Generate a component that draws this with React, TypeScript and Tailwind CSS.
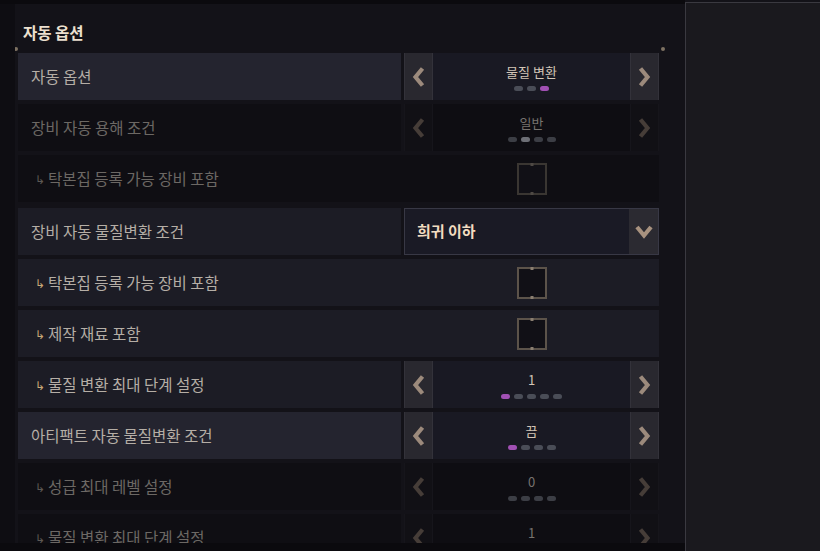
import React from "react";

type Row =
  | { kind: "select"; label: string; value: string; dots: number; active: number; sub?: boolean; disabled?: boolean; highlight?: boolean }
  | { kind: "check"; label: string; sub?: boolean; disabled?: boolean }
  | { kind: "dropdown"; label: string; value: string };

const rows: Row[] = [
  { kind: "select", label: "자동 옵션", value: "물질 변환", dots: 3, active: 2, highlight: true },
  { kind: "select", label: "장비 자동 용해 조건", value: "일반", dots: 4, active: 1, disabled: true },
  { kind: "check", label: "탁본집 등록 가능 장비 포함", sub: true, disabled: true },
  { kind: "dropdown", label: "장비 자동 물질변환 조건", value: "희귀 이하" },
  { kind: "check", label: "탁본집 등록 가능 장비 포함", sub: true },
  { kind: "check", label: "제작 재료 포함", sub: true },
  { kind: "select", label: "물질 변환 최대 단계 설정", value: "1", dots: 5, active: 0, sub: true },
  { kind: "select", label: "아티팩트 자동 물질변환 조건", value: "끔", dots: 4, active: 0, highlight: true },
  { kind: "select", label: "성급 최대 레벨 설정", value: "0", dots: 4, active: -1, sub: true, disabled: true },
  { kind: "select", label: "물질 변환 최대 단계 설정", value: "1", dots: 4, active: -1, sub: true, disabled: true },
];

function Chevron({ dir, dim }: { dir: "left" | "right"; dim?: boolean }) {
  const d = dir === "left" ? "M10.5 1.5 L3.5 10 L10.5 18.5" : "M2.5 1.5 L9.5 10 L2.5 18.5";
  return (
    <svg width="13" height="20" viewBox="0 0 13 20">
      <path d={d} fill="none" stroke={dim ? "#463d38" : "#9c8a7c"} strokeWidth="4.2" strokeLinejoin="miter" />
    </svg>
  );
}

function ArrowButton({ dir, disabled }: { dir: "left" | "right"; disabled?: boolean }) {
  return (
    <div
      className={
        "w-[29px] h-full flex items-center justify-center border-x " +
        (disabled ? "bg-[#111015] border-[#16151b]" : "bg-[#29282f] border-[#33323a]")
      }
    >
      <Chevron dir={dir} dim={disabled} />
    </div>
  );
}

function Label({ text, sub, disabled }: { text: string; sub?: boolean; disabled?: boolean }) {
  return (
    <div className={"flex items-center text-[15.5px] " + (sub ? "pl-[17px]" : "pl-[13px]")}>
      {sub && (
        <span className={"mr-[3px] text-[12px] " + (disabled ? "text-[#5e5954]" : "text-[#c9a877]")}>↳</span>
      )}
      <span className={disabled ? "text-[#6c6864]" : "text-[#b5aea6]"}>{text}</span>
    </div>
  );
}

function Dots({ count, active, disabled }: { count: number; active: number; disabled?: boolean }) {
  return (
    <div className="flex gap-[4px] mt-[6px]">
      {Array.from({ length: count }).map((_, i) => (
        <div
          key={i}
          className={
            "w-[9px] h-[5px] rounded-full " +
            (i === active
              ? disabled
                ? "bg-[#6d6f76]"
                : "bg-[#a150b4]"
              : disabled
              ? "bg-[#3c3e45]"
              : "bg-[#4a4d57]")
          }
        />
      ))}
    </div>
  );
}

function Checkbox({ disabled }: { disabled?: boolean }) {
  const c = disabled ? "border-[#3a3632]" : "border-[#5c534a]";
  const dot = disabled ? "bg-[#4e4944]" : "bg-[#8a7e70]";
  return (
    <div className={"relative w-[30px] h-[32px] border-2 bg-[#111016] " + c}>
      <div className={"absolute left-1/2 -translate-x-1/2 -top-[2px] w-[3px] h-[3px] " + dot} />
      <div className={"absolute left-1/2 -translate-x-1/2 -bottom-[2px] w-[3px] h-[3px] " + dot} />
    </div>
  );
}

function OptionRow({ row }: { row: Row }) {
  if (row.kind === "dropdown") {
    return (
      <div className="flex h-[47px] shrink-0 mt-[2px]">
        <div className="w-[383px] bg-[#1c1c25] flex items-center">
          <Label text={row.label} />
        </div>
        <div className="ml-[3px] flex-1 flex border border-[#383845] bg-[#1a1a25]">
          <div className="flex-1 flex items-center pl-[12px] text-[15px] font-bold text-[#f2dcc0]">{row.value}</div>
          <div className="w-[29px] bg-[#2b2a31] flex items-center justify-center">
            <svg width="18" height="14" viewBox="0 0 18 14">
              <path d="M2 2 L9 10.5 L16 2" fill="none" stroke="#a8927f" strokeWidth="4.2" />
            </svg>
          </div>
        </div>
      </div>
    );
  }
  const disabled = "disabled" in row && row.disabled;
  const labelBg = disabled ? "bg-[#0f0e13]" : "highlight" in row && row.highlight ? "bg-[#24242f]" : "bg-[#1c1c25]";
  if (row.kind === "check") {
    return (
      <div className={"flex h-[47px] shrink-0 " + labelBg}>
        <div className="w-[383px] flex items-center">
          <Label text={row.label} sub={row.sub} disabled={disabled} />
        </div>
        <div className="ml-[3px] flex-1 flex items-center justify-center">
          <Checkbox disabled={disabled} />
        </div>
      </div>
    );
  }
  return (
    <div className="flex h-[47px] shrink-0">
      <div className={"w-[383px] flex items-center " + labelBg}>
        <Label text={row.label} sub={row.sub} disabled={disabled} />
      </div>
      <div className={"ml-[3px] flex-1 flex " + (disabled ? "bg-[#0e0d12]" : "bg-[#191923]")}>
        <ArrowButton dir="left" disabled={disabled} />
        <div className="flex-1 flex flex-col items-center justify-center pt-[2px]">
          <div className={"text-[13px] leading-[16px] " + (disabled ? "text-[#77726e]" : "text-[#d3c5b6]")}>{row.value}</div>
          <Dots count={row.dots} active={row.active} disabled={disabled} />
        </div>
        <ArrowButton dir="right" disabled={disabled} />
      </div>
    </div>
  );
}

export default function App() {
  return (
    <div
      className="w-[820px] h-[551px] overflow-hidden flex bg-[#131218]"
      style={{ fontFamily: '"Noto Sans CJK KR", "Noto Sans", sans-serif' }}
    >
      {/* left settings column */}
      <div className="w-[685px] h-full flex flex-col">
        <div className="h-[4px] bg-[#0b0a0e] shrink-0" />
        <div className="flex-1 min-h-0 flex bg-[#131218]">
          <div className="w-[15px] bg-[#0e0d12]" />
          <div className="flex-1 min-h-0 flex flex-col overflow-hidden">
            <div className="pt-[19px] pl-[8px] text-[15.5px] font-bold text-[#ece0cf] leading-[18px]">자동 옵션</div>
            <div className="relative mt-[7px] mr-[21px] h-[1px] bg-[#6f6353]">
              <div className="absolute -left-[1px] -top-[1.5px] w-[4px] h-[4px] rounded-full bg-[#7e7262]" />
              <div className="absolute -right-[1px] -top-[1.5px] w-[4px] h-[4px] rounded-full bg-[#7e7262]" />
            </div>
            <div className="mt-[5px] ml-[3px] mr-[26px] flex flex-col gap-[4px]">
              {rows.map((r, i) => (
                <OptionRow key={i} row={r} />
              ))}
            </div>
          </div>
        </div>
        <div className="h-[8px] bg-[#0b0a0e] shrink-0" />
      </div>
      {/* right side panel */}
      <div className="flex-1 mt-[2px] border-l border-t border-[#3a3940] bg-[#1a191e]" />
    </div>
  );
}
